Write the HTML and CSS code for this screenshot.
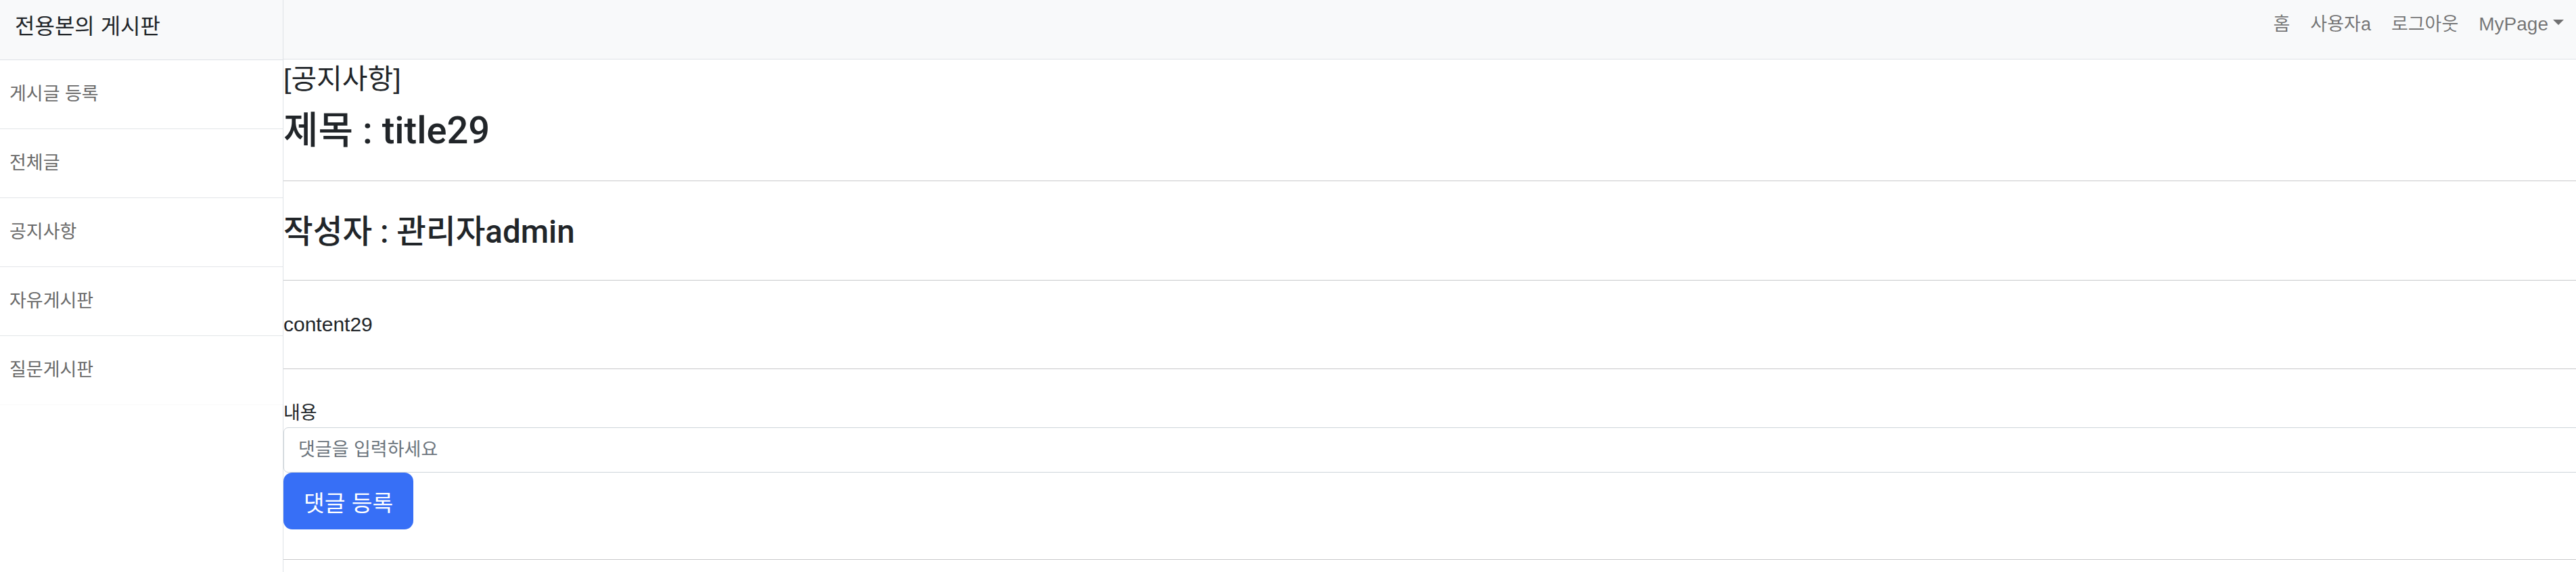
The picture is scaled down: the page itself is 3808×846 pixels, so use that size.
FILE: index.html
```html
<!DOCTYPE html>
<html lang="ko">
<head>
<meta charset="utf-8">
<title>전용본의 게시판</title>
<link rel="stylesheet" href="styles.css">
</head>
<body>
<div class="wrapper">
  <aside class="sidebar">
    <div class="sidebar-heading">전용본의 게시판</div>
    <div class="list-group">
      <a class="list-item" href="#">게시글 등록</a>
      <a class="list-item" href="#">전체글</a>
      <a class="list-item" href="#">공지사항</a>
      <a class="list-item" href="#">자유게시판</a>
      <a class="list-item" href="#">질문게시판</a>
    </div>
  </aside>
  <div class="page">
    <nav class="navbar">
      <ul class="nav-links">
        <li><a class="nav-link" href="#">홈</a></li>
        <li><a class="nav-link" href="#">사용자a</a></li>
        <li><a class="nav-link" href="#">로그아웃</a></li>
        <li><a class="nav-link dropdown-toggle" href="#">MyPage</a></li>
      </ul>
    </nav>
    <main class="article">
      <header class="article-head">
        <h4 class="category">[공지사항]</h4>
        <h2 class="title">제목 : title29</h2>
      </header>
      <section class="author-row">
        <h3 class="author">작성자 : 관리자admin</h3>
      </section>
      <section class="body-row">
        <p class="content">content29</p>
      </section>
      <form class="comment-form">
        <label class="form-label" for="comment">내용</label>
        <input class="form-control" id="comment" type="text" placeholder="댓글을 입력하세요">
        <button class="btn-primary" type="button">댓글 등록</button>
      </form>
    </main>
  </div>
</div>
</body>
</html>
```

FILE: styles.css
```css
* {
  box-sizing: border-box;
}

html, body {
  margin: 0;
  padding: 0;
}

body {
  font-family: "Liberation Sans", "Noto Sans CJK KR", sans-serif;
  color: #212529;
  background: #fff;
  overflow: hidden;
}

.wrapper {
  display: flex;
  min-height: 100vh;
}

/* ---------- sidebar ---------- */
.sidebar {
  flex: 0 0 419px;
  width: 419px;
  border-right: 1px solid #dee2e6;
  background: #fff;
}

.sidebar-heading {
  height: 89px;
  padding: 17px 0 0 22px;
  font-size: 32px;
  line-height: 44px;
  color: #212529;
  background: #f8f9fa;
  border-bottom: 1px solid #dee2e6;
}

.list-group {
  display: flex;
  flex-direction: column;
}

.list-item {
  display: block;
  height: 102px;
  padding-left: 14px;
  font-size: 27px;
  line-height: 101px;
  color: #6a6a6a;
  text-decoration: none;
  border-bottom: 1px solid #e3e5e8;
}

.list-item:last-child {
  border-bottom-color: #fafafa;
}

/* ---------- page ---------- */
.page {
  flex: 1 1 auto;
  min-width: 0;
  overflow: hidden;
}

.navbar {
  height: 88px;
  display: flex;
  justify-content: flex-end;
  align-items: flex-start;
  padding: 14px 18px 0 0;
  background: #f8f9fa;
  border-bottom: 1px solid #dee2e6;
}

.nav-links {
  display: flex;
  gap: 30px;
  margin: 0;
  padding: 0;
  list-style: none;
}

.nav-link {
  display: block;
  font-size: 27px;
  line-height: 44px;
  color: rgba(0, 0, 0, 0.55);
  text-decoration: none;
}

.dropdown-toggle {
  font-size: 28px;
}

.dropdown-toggle::after {
  content: "";
  display: inline-block;
  margin-left: 7px;
  vertical-align: 8px;
  border-top: 8px solid;
  border-right: 8px solid transparent;
  border-left: 8px solid transparent;
  border-bottom: 0;
}

/* ---------- article ---------- */
.article-head {
  padding: 6px 0 41px;
  border-bottom: 1px solid #c8c9ca;
}

.category {
  margin: 0;
  font-size: 41px;
  line-height: 46px;
  font-weight: 400;
}

.title {
  margin: 20px 0 0;
  font-family: Roboto, "Noto Sans CJK KR", sans-serif;
  font-size: 56px;
  line-height: 66px;
  font-weight: 500;
}

.author-row {
  padding: 48px 0 44px;
  border-bottom: 1px solid #c8c9ca;
}

.author {
  margin: 0;
  font-family: Roboto, "Noto Sans CJK KR", sans-serif;
  font-size: 47.5px;
  line-height: 54px;
  font-weight: 500;
}

.body-row {
  padding: 47px 0 47px;
  border-bottom: 1px solid #c8c9ca;
}

.content {
  margin: 0;
  font-size: 30px;
  line-height: 36px;
}

.comment-form {
  padding: 51px 0 44px;
  border-bottom: 1px solid #c8c9ca;
}

.form-label {
  display: block;
  font-size: 27px;
  line-height: 28px;
  margin-bottom: 7px;
}

.form-control {
  display: block;
  width: calc(100% + 24px);
  height: 67px;
  padding: 0 21px;
  font-family: inherit;
  font-size: 27px;
  color: #212529;
  background: #fff;
  border: 1px solid #ced4da;
  border-radius: 7px;
  outline: none;
}

.form-control::placeholder {
  color: #6c757d;
}

.btn-primary {
  display: block;
  height: 84px;
  padding: 0 30px;
  font-family: inherit;
  font-size: 33.4px;
  color: #fff;
  background: #376ff6;
  border: none;
  border-radius: 13px;
  cursor: pointer;
}
```
